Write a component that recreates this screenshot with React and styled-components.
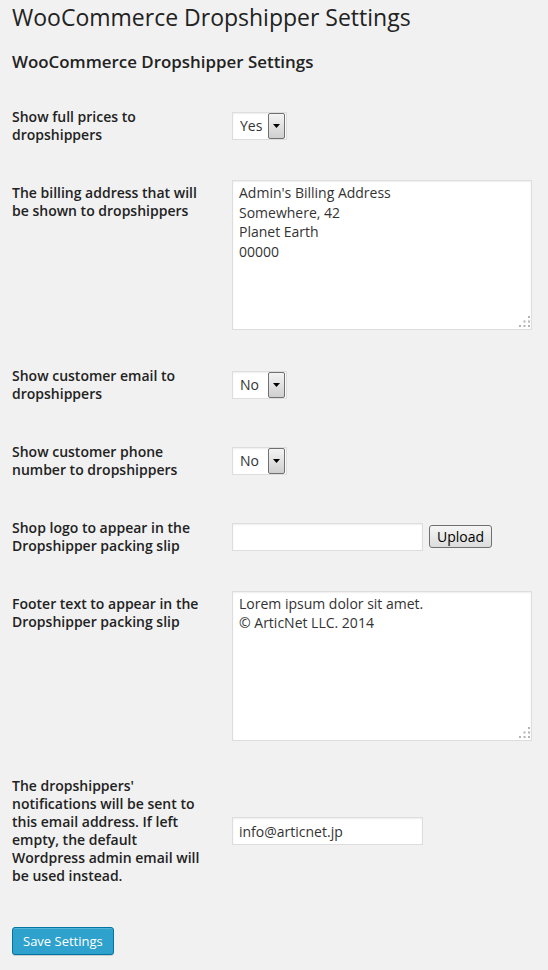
import React from "react";
import styled, { createGlobalStyle } from "styled-components";

const GlobalStyle = createGlobalStyle`
  html, body { margin: 0; padding: 0; background: #f1f1f1; }
  body { font-family: "Open Sans", "Liberation Sans", sans-serif; color: #222; }
  * { box-sizing: border-box; }
`;

const Wrap = styled.div`
  padding: 0 12px;
  min-height: 970px;
`;

const Title = styled.h1`
  margin: 3px 0 0;
  font-size: 23px;
  line-height: 29px;
  font-weight: 400;
  color: #222;
`;

const Subtitle = styled.h3`
  margin: 18.7px 0 15.6px;
  font-size: 16.9px;
  line-height: 22px;
  font-weight: 600;
  color: #222;
`;

const FormTable = styled.div`
  display: flex;
  flex-direction: column;
`;

const Row = styled.div`
  display: grid;
  grid-template-columns: 220px 1fr;
`;

const Label = styled.div`
  align-self: start;
  padding: 20px 20px 20px 0;
  font-size: 14px;
  line-height: 18px;
  font-weight: 600;
  color: #222;
`;

const Field = styled.div`
  align-self: ${(p) => (p.$tall ? "start" : "center")};
  padding: ${(p) => (p.$tall ? "16px 0 16.4px" : "15px 0")};
  display: flex;
  align-items: center;
  gap: 6px;
`;

const SelectBox = styled.div`
  display: flex;
  align-items: stretch;
  width: 55px;
  height: 28px;
  background: #fff;
  border: 1px solid #ddd;
  box-shadow: inset 0 1px 2px rgba(0, 0, 0, 0.07);
`;

const SelectValue = styled.span`
  flex: 1;
  padding-left: 7px;
  font-size: 14px;
  line-height: 26px;
  color: #333;
`;

const ArrowButton = styled.span`
  width: 17px;
  margin-right: 1px;
  border: 1px solid #707070;
  border-radius: 2px;
  background: linear-gradient(#f4f4f4, #cfcfcf);
  display: flex;
  align-items: center;
  justify-content: center;
`;

const TextAreaWrap = styled.div`
  position: relative;
  width: 300px;
  height: 150px;
`;

const TextArea = styled.textarea`
  display: block;
  width: 300px;
  height: 150px;
  margin: 0;
  padding: 2px 6px;
  border: 1px solid #ddd;
  box-shadow: inset 0 1px 2px rgba(0, 0, 0, 0.07);
  background: #fff;
  font-family: "Open Sans", "Liberation Sans", sans-serif;
  font-size: 14px;
  line-height: 19.6px;
  color: #333;
  resize: none;
  outline: none;
`;

const Grip = styled.svg`
  position: absolute;
  right: 2px;
  bottom: 3px;
  width: 11px;
  height: 11px;
`;

const TextInput = styled.input`
  width: 191px;
  height: 28px;
  margin: 0;
  padding: 0 6px;
  border: 1px solid #ddd;
  box-shadow: inset 0 1px 2px rgba(0, 0, 0, 0.07);
  background: #fff;
  font-family: "Open Sans", "Liberation Sans", sans-serif;
  font-size: 14px;
  color: #333;
  outline: none;
`;

const LegacyButton = styled.button`
  width: 63px;
  height: 23px;
  padding: 0;
  border: 1px solid #707070;
  border-radius: 3px;
  background: linear-gradient(#f6f6f6, #dcdcdc);
  font-family: "Open Sans", "Liberation Sans", sans-serif;
  font-size: 14px;
  line-height: 20px;
  color: #000;
`;

const Submit = styled.div`
  margin-top: 22px;
`;

const PrimaryButton = styled.button`
  height: 28px;
  padding: 0 10px 1px;
  border: 1px solid #0074a2;
  border-radius: 3px;
  background: #2ea2cc;
  box-shadow: inset 0 1px 0 rgba(120, 200, 230, 0.5), 0 1px 0 rgba(0, 0, 0, 0.15);
  font-family: "Open Sans", "Liberation Sans", sans-serif;
  font-size: 13px;
  line-height: 26px;
  color: #fff;
`;

function Select({ value }) {
  return (
    <SelectBox>
      <SelectValue>{value}</SelectValue>
      <ArrowButton>
        <svg width="7" height="4" viewBox="0 0 7 4">
          <path d="M0 0h7L3.5 4z" fill="#000" />
        </svg>
      </ArrowButton>
    </SelectBox>
  );
}

function Area({ value }) {
  return (
    <TextAreaWrap>
      <TextArea defaultValue={value} />
      <Grip viewBox="0 0 11 11">
        <g fill="#b3b3b3">
          <rect x="9" y="0" width="2" height="2" />
          <rect x="4.5" y="4.5" width="2" height="2" />
          <rect x="9" y="4.5" width="2" height="2" />
          <rect x="0" y="9" width="2" height="2" />
          <rect x="4.5" y="9" width="2" height="2" />
          <rect x="9" y="9" width="2" height="2" />
        </g>
      </Grip>
    </TextAreaWrap>
  );
}

export default function App() {
  return (
    <>
      <GlobalStyle />
      <Wrap>
        <Title>WooCommerce Dropshipper Settings</Title>
        <Subtitle>WooCommerce Dropshipper Settings</Subtitle>
        <FormTable>
          <Row>
            <Label>Show full prices to dropshippers</Label>
            <Field>
              <Select value="Yes" />
            </Field>
          </Row>
          <Row>
            <Label>The billing address that will be shown to dropshippers</Label>
            <Field $tall>
              <Area value={"Admin's Billing Address\nSomewhere, 42\nPlanet Earth\n00000"} />
            </Field>
          </Row>
          <Row>
            <Label>Show customer email to dropshippers</Label>
            <Field>
              <Select value="No" />
            </Field>
          </Row>
          <Row>
            <Label>Show customer phone number to dropshippers</Label>
            <Field>
              <Select value="No" />
            </Field>
          </Row>
          <Row>
            <Label>Shop logo to appear in the Dropshipper packing slip</Label>
            <Field>
              <TextInput type="text" defaultValue="" />
              <LegacyButton type="button">Upload</LegacyButton>
            </Field>
          </Row>
          <Row>
            <Label>Footer text to appear in the Dropshipper packing slip</Label>
            <Field $tall>
              <Area value={"Lorem ipsum dolor sit amet.\n© ArticNet LLC. 2014"} />
            </Field>
          </Row>
          <Row>
            <Label>
              The dropshippers' notifications will be sent to this email address. If left empty, the default Wordpress admin email will be used instead.
            </Label>
            <Field>
              <TextInput type="text" defaultValue="info@articnet.jp" />
            </Field>
          </Row>
        </FormTable>
        <Submit>
          <PrimaryButton type="button">Save Settings</PrimaryButton>
        </Submit>
      </Wrap>
    </>
  );
}
